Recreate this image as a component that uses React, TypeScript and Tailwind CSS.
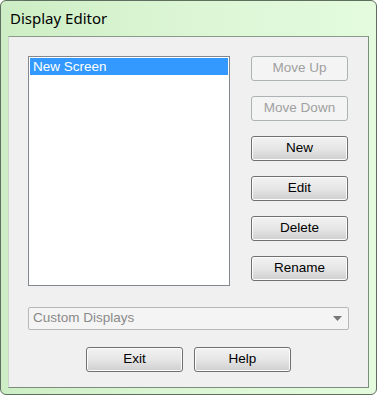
import { ReactNode } from 'react';

interface BtnProps {
  children: ReactNode;
  disabled?: boolean;
}

const WinButton = ({ children, disabled }: BtnProps) => {
  if (disabled) {
    return (
      <div className="flex items-center justify-center w-[97px] h-[25px] rounded-[3px] border border-[#adb2b5] bg-[#f4f4f4] text-[#a0a0a0]">
        {children}
      </div>
    );
  }
  return (
    <div className="flex items-center justify-center w-[97px] h-[25px] rounded-[3px] border border-[#707070] bg-gradient-to-b from-[#f2f2f2] via-[#e6e6e6] to-[#cfcfcf] text-black shadow-[inset_0_0_0_1px_#fcfcfc]">
      {children}
    </div>
  );
};

export default function App() {
  const buttons = [
    { label: 'Move Up', disabled: true },
    { label: 'Move Down', disabled: true },
    { label: 'New' },
    { label: 'Edit' },
    { label: 'Delete' },
    { label: 'Rename' },
  ];

  return (
    <div
      className="flex flex-col w-[377px] h-[395px] rounded-[6px] border border-[#5f6f5f] bg-gradient-to-r from-[#cdeec4] via-[#dcf6d5] to-[#e4fbde] overflow-hidden"
      style={{ fontFamily: '"Liberation Sans", Arial, sans-serif' }}
    >
      <div className="h-[35px] flex items-start pl-[9px] pt-[6px]">
        <span
          className="text-[15px] text-black"
          style={{ fontFamily: '"Noto Sans", "Open Sans", sans-serif' }}
        >
          Display Editor
        </span>
      </div>
      <div className="mx-[7px] mb-[6px] flex-1 border border-[#7d8d7d] border-l-[#c8d8c8] border-t-[#8a9a8a] bg-[#f0f0f0] text-[13.5px] flex flex-col">
        <div className="flex pl-[19px] pt-[19px]">
          <div className="w-[202px] h-[230px] border border-[#828790] bg-white p-[1px]">
            <div className="h-[17px] bg-[#3399ff] text-white leading-[17px] pl-[3px]">New Screen</div>
          </div>
          <div className="flex flex-col gap-[15px] ml-[21px]">
            {buttons.map((b) => (
              <WinButton key={b.label} disabled={b.disabled}>
                {b.label}
              </WinButton>
            ))}
          </div>
        </div>
        <div className="ml-[19px] mt-[21px] w-[321px] h-[23px] rounded-[2px] border border-[#b8b8b8] bg-[#f4f4f4] flex items-center justify-between pl-[4px] pr-[6px] text-[#8a8a8a]">
          <span>Custom Displays</span>
          <svg width="9" height="5" viewBox="0 0 9 5">
            <polygon points="0,0 9,0 4.5,5" fill="#777" />
          </svg>
        </div>
        <div className="flex justify-center gap-[11px] mt-[17px]">
          <WinButton>Exit</WinButton>
          <WinButton>Help</WinButton>
        </div>
      </div>
    </div>
  );
}
